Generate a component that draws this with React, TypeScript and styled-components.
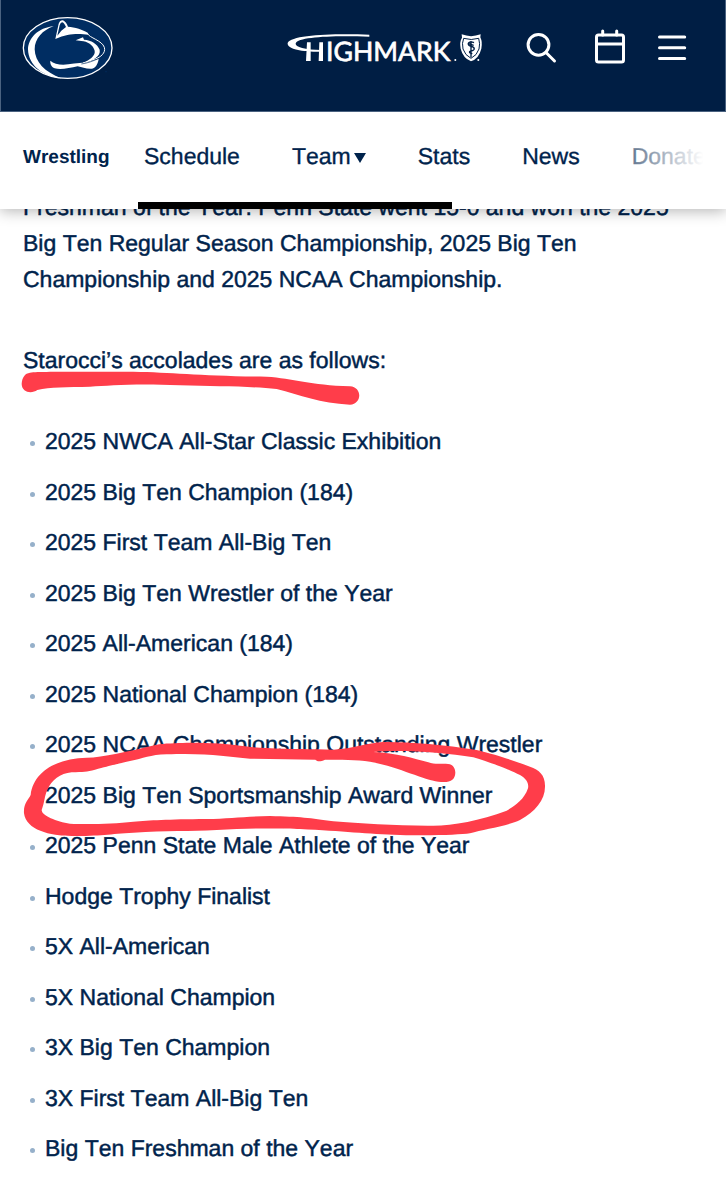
import React from "react";
import styled, { createGlobalStyle } from "styled-components";

const navy = "#001e44";
const ink = "#00234c";
const marker = "#ff3d4a";

const GlobalStyle = createGlobalStyle`
  *, *::before, *::after { box-sizing: border-box; }
  body {
    margin: 0;
    background: #fff;
    color: ${ink};
    font-family: "Liberation Sans", Arial, Helvetica, sans-serif;
    font-size: 23px;
    line-height: 36px;
    font-kerning: none;
    text-rendering: geometricPrecision;
  }
`;

const Page = styled.div`
  display: flex;
  flex-direction: column;
  min-height: 100vh;
  overflow-x: hidden;
`;

const SiteHeader = styled.header`
  position: sticky;
  top: 0;
  z-index: 2;
  background: #fff;
  box-shadow: 0 2px 14px rgba(0, 0, 0, 0.3);
`;

const TopBar = styled.div`
  display: flex;
  align-items: flex-start;
  height: 112px;
  padding: 12px 37px 0 17px;
  background: ${navy};
  border: 1px solid #4a6280;
  border-top: 0;
`;

const HomeLink = styled.a`
  display: block;
  height: 72px;
`;

const SponsorLink = styled.a`
  display: block;
  height: 70px;
  margin: 3px 30px 0 auto;
`;

const Actions = styled.div`
  display: flex;
  gap: 27px;
  padding-top: 14px;
`;

const IconButton = styled.button<{ $width: number }>`
  width: ${(p) => p.$width}px;
  height: 44px;
  padding: 0;
  border: 0;
  background: none;
  color: #fff;
  cursor: pointer;

  svg {
    display: block;
    fill: none;
    stroke: currentColor;
    stroke-linecap: round;
    stroke-linejoin: round;
  }
`;

const SportNav = styled.nav`
  position: relative;
  display: flex;
  height: 97px;
  padding-left: 23px;
`;

const SportName = styled.a`
  flex: none;
  width: 115px;
  padding-top: 28px;
  font-size: 19px;
  font-weight: 700;
  color: ${ink};
  text-decoration: none;
`;

const Scroller = styled.div`
  position: relative;
  flex: 1;
  min-width: 0;
  overflow: hidden;
`;

const NavList = styled.ul`
  display: flex;
  gap: 52px;
  margin: 0;
  padding: 26px 0 0 6px;
  list-style: none;
`;

const NavLink = styled.a`
  display: flex;
  align-items: center;
  gap: 3px;
  color: ${ink};
  text-decoration: none;
  -webkit-text-stroke: 0.015em ${ink};
`;

const ScrollThumb = styled.div`
  position: absolute;
  left: 0;
  bottom: 0;
  width: 314px;
  height: 7px;
  background: #000;
`;

const Fade = styled.div`
  position: absolute;
  top: 0;
  right: 0;
  width: 140px;
  height: 80px;
  background: linear-gradient(to right, rgba(255, 255, 255, 0), #fff 84%);
  pointer-events: none;
`;

const Article = styled.main`
  display: flex;
  flex: 1;
  flex-direction: column;
  margin-top: -20px;
  padding: 0 23px 34px;
  -webkit-text-stroke: 0.02em ${ink};
`;

const Paragraph = styled.p`
  position: relative;
  margin: 0 0 45px;
`;

const Accolades = styled.ul`
  display: flex;
  flex: 1;
  flex-direction: column;
  justify-content: space-between;
  gap: 14px;
  margin: 0;
  padding: 0 0 0 22px;
  list-style: none;
`;

const Accolade = styled.li`
  position: relative;

  &::before {
    content: "";
    position: absolute;
    top: 18px;
    left: -15px;
    width: 5px;
    height: 5px;
    border-radius: 50%;
    background: #96b0ca;
  }
`;

const UnderlineMark = styled.svg`
  position: absolute;
  top: 27px;
  left: -3px;
  z-index: 1;
  fill: ${marker};
  pointer-events: none;
`;

const CircleMark = styled.svg`
  position: absolute;
  top: -39px;
  left: -25px;
  z-index: 1;
  fill: ${marker};
  pointer-events: none;
`;

const LionLogo = () => (
  <svg width="100" height="72" viewBox="0 0 300 216" aria-hidden="true">
    <ellipse cx="149" cy="108" rx="133" ry="91" fill="#002d62" stroke="#fff" strokeWidth="4" />
    <g fill="#fff">
      <path d="M107 43C60 47 31 79 30 112C31 160 75 194 130 199C80 180 51 150 50 112C50 80 74 54 107 43Z" />
      <path
        fillRule="evenodd"
        d="M112 81L122 35Q126 24 135 25Q144 29 150 44C170 45 195 53 210 63L211 68C188 66 155 61 112 81ZM118 71L130 56L144 45Q138 31 132 31Q127 32 125 40Z"
      />
      <path d="M173 85L195 76L198 83C220 84 238 96 245 113C249 134 224 145 200 152C221 138 232 130 230 116C226 99 208 88 190 87Z" />
      <path d="M97 146C108 157 130 160 151 157C174 153 197 154 216 148L242 141C240 155 234 167 222 170C204 171 193 166 179 163C154 168 128 175 110 169C99 164 96 155 97 146Z" />
    </g>
    <path d="M209 65C213 77 252 85 259 106C264 123 247 136 232 141C216 146 205 149 195 153" fill="none" stroke="#fff" strokeWidth="3" />
    <path d="M190 156C210 153 225 147 238 141" fill="none" stroke="#002d62" strokeWidth="2" />
    <circle cx="264" cy="179" r="2" fill="#002d62" />
  </svg>
);

const HighmarkLogo = () => (
  <svg width="220" height="70" viewBox="0 0 660 210" aria-hidden="true">
    <path
      d="M298 59C190 55 64 59 53 84C50 101 92 112 155 110L155 105C105 105 75 97 77 85C84 65 190 61 298 65Z"
      fill="#fff"
    />
    <path d="M111 82H122V138H108ZM148 82H159V138H146Z" fill="#fff" />
    <text x="168" y="138" fill="#fff" stroke="#fff" strokeWidth="2" fontFamily="Lato, sans-serif" fontSize="80">
      IGHMARK
    </text>
    <circle cx="556" cy="135" r="3" fill="#fff" />
    <path d="M575 58Q603 69 632 58L631 67Q638 81 634 101Q627 130 603 139Q579 129 572 101Q568 80 576 68Z" fill="#fff" />
    <path d="M581 70Q604 77 626 70Q631 86 627 102Q621 121 603 130Q585 121 579 102Q575 84 581 70Z" fill="none" stroke={navy} strokeWidth="3" />
    <path d="M603 78V127M612 83C598 76 588 87 600 93C616 96 617 106 603 108C594 110 600 117 607 115M594 85L611 91" fill="none" stroke={navy} strokeWidth="4" />
    <circle cx="625" cy="135" r="3" fill="#fff" />
  </svg>
);

const accolades = [
  "2025 NWCA All-Star Classic Exhibition",
  "2025 Big Ten Champion (184)",
  "2025 First Team All-Big Ten",
  "2025 Big Ten Wrestler of the Year",
  "2025 All-American (184)",
  "2025 National Champion (184)",
  "2025 NCAA Championship Outstanding Wrestler",
  "2025 Big Ten Sportsmanship Award Winner",
  "2025 Penn State Male Athlete of the Year",
  "Hodge Trophy Finalist",
  "5X All-American",
  "5X National Champion",
  "3X Big Ten Champion",
  "3X First Team All-Big Ten",
  "Big Ten Freshman of the Year",
];

const circled = "2025 Big Ten Sportsmanship Award Winner";

export default function App() {
  return (
    <Page>
      <GlobalStyle />
      <SiteHeader>
        <TopBar>
          <HomeLink href="#" aria-label="Penn State Athletics">
            <LionLogo />
          </HomeLink>
          <SponsorLink href="#" aria-label="Highmark">
            <HighmarkLogo />
          </SponsorLink>
          <Actions>
            <IconButton $width={44} aria-label="Search">
              <svg width="44" height="44" viewBox="520 26 44 44" strokeWidth="3">
                <circle cx="538.5" cy="44.8" r="10.4" />
                <path d="M546 52.5L554.5 61" />
              </svg>
            </IconButton>
            <IconButton $width={38} aria-label="Calendar">
              <svg width="38" height="44" viewBox="591 26 38 44" strokeWidth="3">
                <rect x="596.5" y="35" width="27" height="27" rx="2" />
                <path d="M597 44H623M602.7 31V35M616.7 31V35" />
              </svg>
            </IconButton>
            <IconButton $width={32} aria-label="Menu">
              <svg width="32" height="44" viewBox="656 26 32 44" strokeWidth="3">
                <path d="M659.5 37H684.7M659.5 47.7H684.7M659.5 58.4H684.7" />
              </svg>
            </IconButton>
          </Actions>
        </TopBar>
        <SportNav aria-label="Wrestling">
          <SportName href="#">Wrestling</SportName>
          <Scroller>
            <NavList>
              <li><NavLink href="#">Schedule</NavLink></li>
              <li>
                <NavLink href="#">
                  Team
                  <svg width="12" height="14" viewBox="0 0 12 14" aria-hidden="true">
                    <path d="M0 4H12L6 14Z" fill={ink} />
                  </svg>
                </NavLink>
              </li>
              <li><NavLink href="#">Stats</NavLink></li>
              <li><NavLink href="#">News</NavLink></li>
              <li><NavLink href="#">Donate</NavLink></li>
            </NavList>
            <ScrollThumb />
            <Fade />
          </Scroller>
        </SportNav>
      </SiteHeader>
      <Article>
        <Paragraph>
          Freshman of the Year. Penn State went 15-0 and won the 2025 Big Ten Regular Season Championship, 2025 Big Ten
          Championship and 2025 NCAA Championship.
        </Paragraph>
        <Paragraph>
          Starocci’s accolades are as follows:
          <UnderlineMark width="345" height="40" viewBox="60 87 1035 120" aria-hidden="true">
            <path d="M90 98C120 94 250 96 400 95C520 97 600 108 800 110C880 115 930 135 1050 139C1087 142 1087 190 1050 194C960 190 900 165 830 147C750 138 650 140 540 136C400 130 330 137 270 140C200 142 150 140 112 150C95 162 66 158 65 132C66 112 75 100 90 98Z" />
          </UnderlineMark>
        </Paragraph>
        <Accolades>
          {accolades.map((text) => (
            <Accolade key={text}>
              {text}
              {text === circled && (
                <CircleMark width="530" height="100" viewBox="60 54 1590 300" aria-hidden="true">
                  <path
                    fillRule="evenodd"
                    d="M560 68C530 69 490 70 470 74C380 95 310 112 260 113C170 115 100 155 92 225C85 240 70 250 72 280C78 330 150 348 215 348C300 348 330 342 400 338C500 332 570 334 650 330C750 324 850 325 900 327C1030 333 1100 342 1200 345C1300 348 1380 344 1410 340C1450 328 1520 319 1560 300C1605 275 1635 240 1635 200C1636 165 1618 150 1590 140C1540 122 1500 107 1430 90C1330 73 1220 65 1150 66C1100 69 1060 86 1000 89C940 87 870 88 800 84C740 83 700 72 640 70C610 68 590 68 560 68ZM215 157C250 155 260 156 285 149C350 132 360 130 390 123C430 116 450 104 500 103C620 98 680 110 750 116C820 118 880 118 946 119C950 124 960 126 975 119C1020 119 1070 119 1110 125C1200 142 1270 180 1315 185C1350 190 1365 180 1366 158C1366 140 1355 130 1335 131C1310 132 1300 132 1285 127C1240 115 1190 99 1120 96C1200 88 1330 97 1420 112C1500 137 1530 150 1560 165C1580 177 1587 190 1584 205C1572 240 1545 257 1520 272C1440 302 1360 316 1300 317C1200 318 1080 310 1000 304C930 294 900 290 810 288C740 289 690 296 620 297C500 298 450 301 400 305C340 312 260 314 210 311C170 305 125 287 125 270C135 243 133 228 142 210C155 180 180 160 215 157Z"
                  />
                </CircleMark>
              )}
            </Accolade>
          ))}
        </Accolades>
      </Article>
    </Page>
  );
}
